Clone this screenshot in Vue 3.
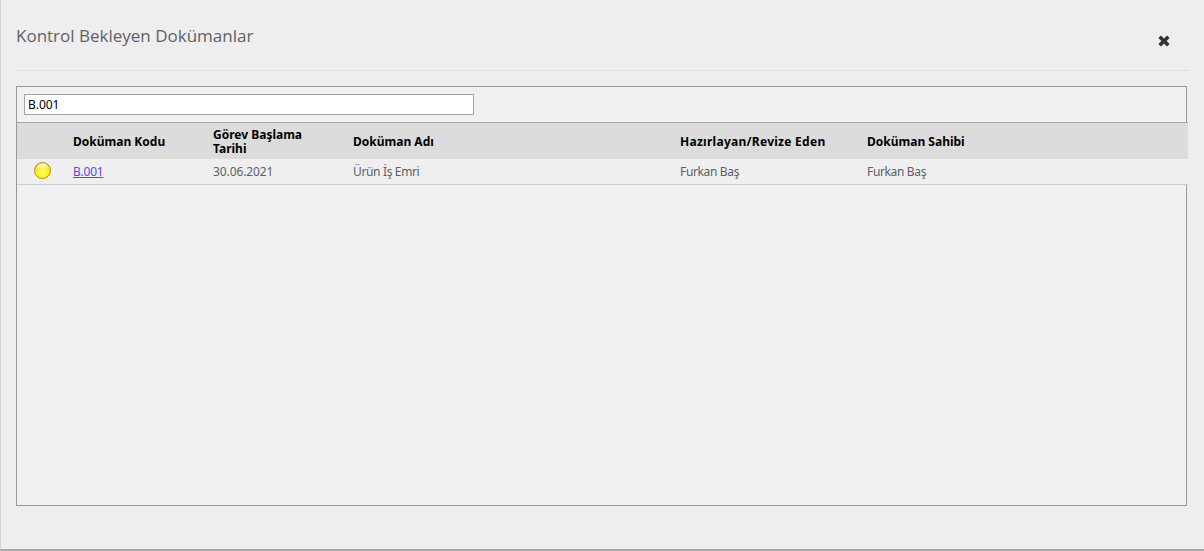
<template>
  <div class="modal">
    <header class="head">
      <h4 class="title">Kontrol Bekleyen Dokümanlar</h4>
      <svg class="close" width="12" height="12" viewBox="0 0 12 12" aria-label="Kapat">
        <path d="M3 0.4 L6 3.4 L9 0.4 L11.6 3 L8.6 6 L11.6 9 L9 11.6 L6 8.6 L3 11.6 L0.4 9 L3.4 6 L0.4 3 Z" fill="#333" />
      </svg>
    </header>
    <div class="panel">
      <div class="search">
        <input class="field" type="text" value="B.001" />
      </div>
      <div class="grid">
        <div class="row thead">
          <div></div>
          <div>Doküman Kodu</div>
          <div class="narrow">Görev Başlama Tarihi</div>
          <div>Doküman Adı</div>
          <div class="wide">Hazırlayan/Revize Eden</div>
          <div>Doküman Sahibi</div>
        </div>
        <div class="row tbody">
          <div class="dotcell"><span class="dot"></span></div>
          <div><a class="link" href="#">B.001</a></div>
          <div class="tight-s">30.06.2021</div>
          <div class="tight">Ürün İş Emri</div>
          <div class="tight">Furkan Baş</div>
          <div class="tight">Furkan Baş</div>
        </div>
      </div>
    </div>
  </div>
</template>

<script setup>
</script>

<style>
html, body { margin: 0; background: #eeeeee; }
</style>

<style scoped>
.modal {
  box-sizing: border-box;
  width: 1204px;
  height: 551px;
  background: #eeeeee;
  border-left: 1px solid #d4d4d4;
  border-bottom: 2px solid #a8a8a8;
  padding: 0 15px;
  font-family: Tahoma, "DejaVu Sans", sans-serif;
}
.head {
  box-sizing: border-box;
  height: 71px;
  border-bottom: 1px solid #dfdfdf;
  display: flex;
  justify-content: space-between;
  align-items: flex-start;
}
.title {
  margin: 25px 0 0;
  font: 400 17px/22px "Open Sans", sans-serif;
  color: #5e6268;
}
.close { margin: 35px 19px 0 0; }
.panel {
  box-sizing: border-box;
  margin-top: 15px;
  width: 1171px;
  height: 420px;
  border: 1px solid #999999;
  background: #f1f1f1;
}
.search {
  box-sizing: border-box;
  height: 35px;
  padding: 7px;
}
.field {
  display: block;
  box-sizing: border-box;
  width: 450px;
  height: 21px;
  padding: 0 3px;
  border: 1px solid #a5a5a5;
  background: #fff;
  color: #000;
  font: 12px/19px "Noto Sans", sans-serif;
  outline: none;
}
.grid { width: 1171px; }
.row {
  display: grid;
  grid-template-columns: 56px 140px 140px 327px 187px 1fr;
  align-items: center;
  font: 12px/14px "Noto Sans", sans-serif;
}
.thead {
  box-sizing: border-box;
  height: 37px;
  border-top: 1px solid #a5a5a5;
  padding-top: 1px;
  background: #dcdcdc;
  color: #000;
  font-weight: 700;
}
.narrow { width: 110px; }
.wide { letter-spacing: 0.27px; }
.tbody {
  box-sizing: border-box;
  height: 26px;
  border-bottom: 1px solid #cfcfcf;
  background: #efefef;
  color: #585f69;
  padding-top: 1px;
}
.tight { letter-spacing: -0.35px; }
.tight-s { letter-spacing: -0.1px; }
.dotcell { display: flex; padding-left: 17px; margin-top: -3px; }
.dot {
  box-sizing: border-box;
  width: 17px;
  height: 17px;
  border-radius: 50%;
  border: 1px solid #b08a2a;
  background:
    radial-gradient(ellipse 55% 30% at 50% 16%, rgba(255, 255, 255, 0.85), rgba(255, 255, 255, 0) 100%),
    radial-gradient(circle at 50% 62%, #ffff70 0, #fff000 55%, #dcc000 100%);
}
.link { color: #5f45f0; text-decoration: underline; letter-spacing: -0.2px; }
</style>
